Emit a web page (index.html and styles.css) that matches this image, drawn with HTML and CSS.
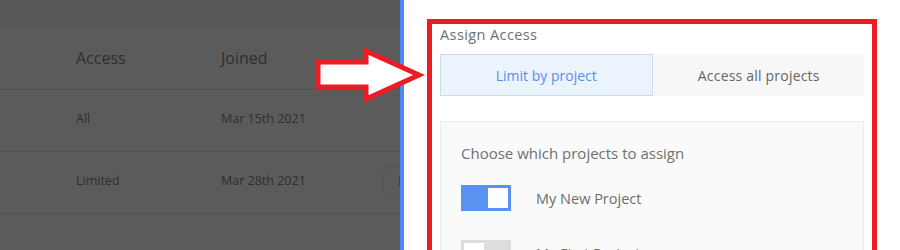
FILE: index.html
```html
<!DOCTYPE html>
<html>
<head>
<meta charset="utf-8">
<link rel="stylesheet" href="styles.css">
</head>
<body>
<div class="page">
  <div class="backdrop">
    <div class="topbar"></div>
    <div class="row head">
      <div class="c1">Access</div>
      <div class="c2">Joined</div>
    </div>
    <div class="row">
      <div class="c1 cell">All</div>
      <div class="c2 cell">Mar 15th 2021</div>
    </div>
    <div class="row">
      <div class="c1 cell">Limited</div>
      <div class="c2 cell">Mar 28th 2021</div>
      <div class="editbtn">E</div>
    </div>
    <div class="row"></div>
  </div>
  <div class="divider"></div>
  <div class="panel">
    <div class="label">Assign Access</div>
    <div class="tabs">
      <div class="tab active">Limit by project</div>
      <div class="tab">Access all projects</div>
    </div>
    <div class="card">
      <div class="card-title">Choose which projects to assign</div>
      <div class="proj">
        <div class="toggle on"><span class="knob"></span></div>
        <div class="proj-name">My New Project</div>
      </div>
      <div class="proj">
        <div class="toggle"><span class="knob"></span></div>
        <div class="proj-name">My First Project</div>
      </div>
    </div>
  </div>
  <div class="highlight"></div>
  <svg class="arrow" width="110" height="60" viewBox="0 0 110 60">
    <polygon points="3,14 51,14 51,3 104,27 51,51 51,39 3,39" fill="#ffffff" stroke="#ed1c24" stroke-width="5" stroke-linejoin="miter"/>
  </svg>
</div>
</body>
</html>
```
FILE: styles.css
```css
html, body {
  margin: 0;
  padding: 0;
}
body {
  width: 900px;
  height: 250px;
  overflow: hidden;
  font-family: "Open Sans", "Liberation Sans", sans-serif;
}
.page {
  position: relative;
  display: flex;
  width: 900px;
  height: 250px;
  overflow: hidden;
}
.backdrop {
  width: 400px;
  flex: none;
  background: #5b5b5b;
  color: #2f2f2f;
  overflow: hidden;
}
.topbar {
  height: 28px;
  background: #585858;
}
.row {
  position: relative;
  display: flex;
  align-items: center;
  height: 61px;
  border-top: 1px solid #535353;
  font-size: 12.5px;
}
.row .cell {
  margin-top: -4px;
}
.row.head {
  height: 60px;
  border-top: 1px solid #5d5d5d;
  font-size: 16px;
}
.row.head div {
  margin-top: -2px;
}
.c1 {
  padding-left: 76px;
  width: 145px;
  box-sizing: content-box;
}
.c2 {
  flex: 1;
}
.editbtn {
  position: absolute;
  left: 383px;
  top: 15px;
  width: 40px;
  height: 27px;
  border: 1px solid #555555;
  border-radius: 4px;
  padding-left: 14px;
  line-height: 27px;
  font-size: 13px;
}
.divider {
  width: 4px;
  flex: none;
  background: #4a8af4;
}
.panel {
  flex: 1;
  background: #ffffff;
  padding: 27px 36px 0 36px;
}
.label {
  font-size: 14.5px;
  letter-spacing: 0.4px;
  color: #707070;
  line-height: 16px;
  height: 16px;
}
.tabs {
  display: flex;
  margin-top: 11px;
  height: 42px;
}
.tab {
  flex: 1;
  display: flex;
  align-items: center;
  justify-content: center;
  font-size: 14px;
  letter-spacing: 0.2px;
  color: #666666;
  background: #f7f7f7;
}
.tab.active {
  background: #ebf3fd;
  border: 1px solid #c9ddf7;
  color: #5b8def;
  margin-right: 1px;
  letter-spacing: 0;
}
.card {
  margin-top: 25px;
  border: 1px solid #ececec;
  background: #fafafa;
  padding: 21px 20px 0 20px;
  height: 200px;
}
.card-title {
  font-size: 15px;
  color: #707070;
  line-height: 20px;
}
.proj {
  display: flex;
  align-items: center;
  margin-top: 22px;
}
.proj + .proj {
  margin-top: 29px;
}
.toggle {
  width: 50px;
  height: 26px;
  background: #dddddd;
  position: relative;
  flex: none;
}
.toggle .knob {
  position: absolute;
  top: 3px;
  left: 3px;
  width: 20px;
  height: 20px;
  background: #ffffff;
}
.toggle.on {
  background: #5893f2;
}
.toggle.on .knob {
  left: 27px;
}
.proj-name {
  margin-left: 25px;
  font-size: 14.5px;
  color: #6d6d6d;
}
.highlight {
  position: absolute;
  left: 427px;
  top: 19px;
  width: 440px;
  height: 260px;
  border: 5px solid #ed1c24;
}
.arrow {
  position: absolute;
  left: 315px;
  top: 48px;
}
```
